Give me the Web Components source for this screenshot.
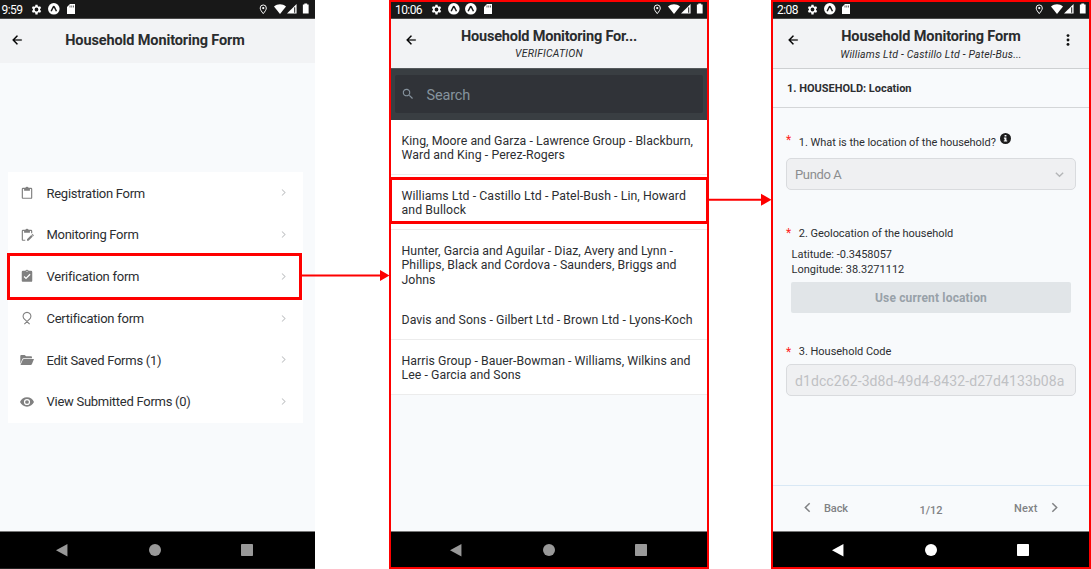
<!DOCTYPE html>
<html lang="en">
<head>
<meta charset="utf-8">
<title>Household Monitoring Form</title>
<style>
body{margin:0;background:#fff;width:1091px;height:569px;overflow:hidden;font-family:Roboto,"Noto Sans",sans-serif;color:#2c2e31}
</style>
</head>
<body>
<form-flow></form-flow>
<script>
const make = (name, html, setup) => customElements.define(name, class extends HTMLElement {
  constructor(){ super(); this.attachShadow({mode:'open'}).innerHTML = typeof html === 'function' ? '' : html; }
  connectedCallback(){
    if (typeof html === 'function') this.shadowRoot.innerHTML = html(this);
    if (setup) setup(this);
  }
});

// A single line of text, tracked so that it fills the width in its "w" attribute.
make('fit-text', `<style>:host{display:block;width:max-content;white-space:nowrap;flex:none}</style><slot></slot>`, el => {
  const w = +el.getAttribute('w');
  const natural = el.getBoundingClientRect().width;
  if (w && natural) el.style.letterSpacing = ((w - natural) / el.textContent.length) + 'px';
});

const ICONS = {
  gear:'<path d="M19.4 13a7 7 0 0 0 0-2l2.1-1.6-2-3.5-2.500 1a7 7 0 0 0-1.700-1L14.900 3h-4l-.4 2.900a7 7 0 0 0-1.700 1l-2.500-1-2 3.500L6.400 11a7 7 0 0 0 0 2l-2.100 1.600 2 3.500 2.500-1a7 7 0 0 0 1.700 1l.4 2.900h4l.4-2.900a7 7 0 0 0 1.700-1l2.500 1 2-3.500zM12.900 15.500a3.500 3.500 0 1 1 0-7 3.500 3.500 0 0 1 0 7z" transform="translate(-.9 0)"/>',
  expo:'<circle cx="12" cy="12" r="12"/><path d="M6.500 17 L11 8Q12 6.500 13 8L17.500 17" fill="none" stroke="#181818" stroke-width="3"/>',
  sd:'<path d="M20 2H10L4 8v14h16z"/><path d="M10 5v4M13.500 5v4M17 5v4" stroke="#181818" stroke-width="1.300"/>',
  pin:'<path d="M12 22C8 17 5 13 5 9.200a7 7 0 0 1 14 0C19 13 16 17 12 22z" fill="none" stroke="currentColor" stroke-width="2.200"/><circle cx="12" cy="9.200" r="2.600"/>',
  wifi:'<path d="M0 7C7 1 17 1 24 7L12 22z"/>',
  signal:'<path d="M0 23L23 0v23z"/><path d="M18.500 8v13" stroke="#181818" stroke-width="2.400"/>',
  battery:'<path d="M9 1h6v2h3v19H6V3h3z"/>',
  back:'<path d="M20 11H7.800l5.600-5.600L12 4l-8 8 8 8 1.400-1.400L7.800 13H20z" stroke="currentColor" stroke-width=".4"/>',
  clip:'<path d="M19 3h-4.200a3 3 0 0 0-5.600 0H5a2 2 0 0 0-2 2v15c0 1.100.9 2 2 2h14a2 2 0 0 0 2-2V5a2 2 0 0 0-2-2zm0 17H5V5h2v3h10V5h2z"/>',
  clipedit:'<path d="M9 20H5V5h2v3h10V5h2v4h2V5a2 2 0 0 0-2-2h-4.200a3 3 0 0 0-5.600 0H5a2 2 0 0 0-2 2v15c0 1.100.9 2 2 2h4z"/><path d="M12 22v-2.600l7.300-7.300 2.600 2.600L14.600 22zM20 11.400l.8-.8q.6-.5 1.200 0l1.400 1.400q.5.600 0 1.200l-.8.8z"/>',
  clipcheck:'<path d="M19 3h-4.200a3 3 0 0 0-5.600 0H5a2 2 0 0 0-2 2v15c0 1.100.9 2 2 2h14a2 2 0 0 0 2-2V5a2 2 0 0 0-2-2z"/><path d="M7 12.800l3.300 3.300L17.300 9" stroke="#fff" stroke-width="2.200" fill="none"/><circle cx="12" cy="4" r="1" fill="#fff"/>',
  ribbon:'<g fill="none" stroke="currentColor" stroke-width="1.900"><path d="M7.500 22.500L15.800 14.500A6.700 6.700 0 1 0 8.200 14.500L16.500 22.500"/></g>',
  folder:'<path d="M.5 19V5q0-1.500 1.500-1.500H8l2.500 2H19q1.500 0 1.500 1.500V9H6Q4.500 9 3.800 10.500z"/><path d="M.8 20.500L5 11.300Q5.500 10.300 6.700 10.300H24l-3.700 9Q19.700 20.500 18.500 20.500z"/>',
  eye:'<path d="M12 4C6.500 4 2 7.500 0 12c2 4.500 6.500 8 12 8S22 16.500 24 12C22 7.500 17.500 4 12 4zM12 17.300a5.300 5.300 0 1 1 0-10.600 5.300 5.300 0 0 1 0 10.600z"/><circle cx="12" cy="12" r="3.200"/>',
  chev:'<path d="M8 4l8 8-8 8" fill="none" stroke="currentColor" stroke-width="2.800"/>',
  chevl:'<path d="M16 4l-8 8 8 8" fill="none" stroke="currentColor" stroke-width="2.800"/>',
  down:'<path d="M4 8l8 8 8-8" fill="none" stroke="currentColor" stroke-width="3"/>',
  search:'<path d="M15.500 14h-.8l-.3-.3a6.500 6.500 0 1 0-.7.7l.3.300v.8l5 5 1.500-1.500zM9.500 14a4.500 4.500 0 1 1 0-9 4.500 4.500 0 0 1 0 9z"/>',
  dots:'<circle cx="12" cy="3.200" r="2.900"/><circle cx="12" cy="12" r="2.900"/><circle cx="12" cy="20.800" r="2.900"/>',
  info:'<circle cx="12" cy="12" r="12"/><path d="M10 4.200h4v3.600h-4zM8.500 9.800H14v6.500h1.700v2.500H8.300v-2.500H10v-4H8.500z" fill="#f8fafc"/>',
  tri:'<path d="M0 12L22 0v24z"/>',
  dot:'<circle cx="12" cy="12" r="12"/>',
  box:'<rect width="24" height="24" rx="1.500"/>'
};
make('ui-icon', el => `<style>:host{display:block;flex:none;width:${el.getAttribute('s')}px;height:${el.getAttribute('s')}px}svg{display:block;overflow:visible}</style>
<svg width="100%" height="100%" viewBox="0 0 24 24" fill="currentColor">${ICONS[el.getAttribute('n')]}</svg>`);

make('status-bar', el => {
  const n = +el.getAttribute('expo') || 1;
  return `<style>
:host{display:flex;align-items:center;background:#181818;color:#fff;flex:none;box-sizing:border-box;border-bottom:1px solid #4a4a4a;font-size:12px;line-height:14px}
.time{width:var(--time,30px);padding-top:1px}.e{margin-left:5.400px}.sd{margin-left:5px}
.r{display:flex;align-items:center;margin-left:auto}
</style><div class="time"><fit-text w="${el.getAttribute('tw')}">${el.getAttribute('time')}</fit-text></div>
<ui-icon n="gear" s="13"></ui-icon>${'<ui-icon class="e" n="expo" s="11.600"></ui-icon>'.repeat(n)}<ui-icon class="sd" n="sd" s="12"></ui-icon>
<div class="r"><ui-icon n="pin" s="10.500" style="margin-right:6px"></ui-icon><ui-icon n="wifi" s="12" style="margin-right:1px"></ui-icon><ui-icon n="signal" s="10" style="margin-right:3px"></ui-icon><ui-icon n="battery" s="11.500"></ui-icon></div>`;
});

make('app-header', el => {
  const sub = el.getAttribute('sub');
  return `<style>
:host{display:grid;grid-template-columns:40px 1fr 40px;background:#f2f3f5;flex:none;box-sizing:border-box;color:#2a2c2e}
.b{color:#000;padding:14.200px 0 0 var(--bx,13px)}.m{color:#111;padding:15.300px 0 0 13px}
.t{display:flex;flex-direction:column;align-items:center;padding-top:var(--ty,8px);margin-left:var(--tx,0)}
.h{font-size:14.500px;font-weight:700;line-height:18px}.s{font-size:10.500px;font-style:italic;line-height:14px;margin-top:var(--sy,0)}
</style><div class="b"><ui-icon n="back" s="14"></ui-icon></div>
<div class="t"><fit-text class="h" w="${el.getAttribute('tw')}">${el.getAttribute('title-text')}</fit-text>${sub ? `<fit-text class="s" w="${el.getAttribute('sw')}">${sub}</fit-text>` : ''}</div>
<div class="m">${el.hasAttribute('menu') ? '<ui-icon n="dots" s="12"></ui-icon>' : ''}</div>`;
});

make('nav-bar', `<style>
:host{display:flex;background:#000;border-top:1px solid #777;flex:none;height:var(--nh,36px);box-sizing:border-box;margin-top:auto;padding:12px 0 0 var(--nx,59px);color:var(--nc,#999)}
</style><ui-icon n="tri" s="12.500"></ui-icon><ui-icon n="dot" s="12" style="margin-left:80.500px"></ui-icon><ui-icon n="box" s="12" style="margin-left:80px"></ui-icon>`);

make('phone-screen', `<style>:host{display:flex;flex-direction:column;box-sizing:border-box;height:569px;background:#f8fafc}</style><slot></slot>`);

make('menu-row', el => `<style>
:host{display:flex;align-items:center;height:41.750px;padding:0 12px 0 12px;font-size:13px;line-height:16px}
.i{color:#808080;margin-right:12.500px}.c{color:#c2c4c6;margin-left:auto}fit-text{margin-top:1.600px}
</style><ui-icon class="i" n="${el.getAttribute('icon')}" s="14"></ui-icon><fit-text w="${el.getAttribute('w')}">${el.textContent}</fit-text><ui-icon class="c" n="chev" s="9" style="margin-right:2.500px"></ui-icon>`);

make('menu-screen', `<style>
:host{display:contents}.card{background:#fff;width:294.500px;margin:109px 0 0 8px}
status-bar{height:19px;padding:0 3.500px 0 1.500px;--time:28.300px}
app-header{height:44px;--bx:10px;--ty:13px;--tx:-5px}nav-bar{--nx:56px;--nh:37px}
</style><phone-screen style="border-bottom:1px solid #222">
<status-bar time="9:59" tw="20.800"></status-bar>
<app-header title-text="Household Monitoring Form" tw="179.500"></app-header>
<div class="card">
<menu-row icon="clip" w="98.500">Registration Form</menu-row>
<menu-row icon="clipedit" w="92">Monitoring Form</menu-row>
<menu-row icon="clipcheck" w="92.300">Verification form</menu-row>
<menu-row icon="ribbon" w="97">Certification form</menu-row>
<menu-row icon="folder" w="114.800">Edit Saved Forms (1)</menu-row>
<menu-row icon="eye" w="144">View Submitted Forms (0)</menu-row>
</div><nav-bar></nav-bar></phone-screen>`);

make('list-row', `<style>:host{display:block;box-sizing:border-box;padding:13.700px 10.500px 11.300px;border-bottom:1px solid #ececec;background:#fff;font-size:12.300px;line-height:14.500px}:host([plain]){border-color:#fff}</style><slot></slot>`);

make('list-screen', `<style>
:host{display:contents}phone-screen{border:2px solid #fe0000}
status-bar{height:17px;padding:0 1.500px 2px 4px;--time:34.600px}
app-header{height:49px;--ty:9.200px;--sy:.8px}
.s{background:#393e42;padding:6px 4px 7px;border-top:1px solid #55595c;height:52px;box-sizing:border-box;flex:none}
.f{background:#303338;border-radius:2px;height:38px;display:flex;align-items:center;color:#86939e;font-size:14.500px;padding-left:6px}
.f ui-icon{margin-right:11.500px}.f fit-text{margin-top:2px}
</style><phone-screen>
<status-bar time="10:06" tw="27" expo="2"></status-bar>
<app-header title-text="Household Monitoring For..." tw="176" sub="VERIFICATION" sw="68"></app-header>
<div class="s"><div class="f"><ui-icon n="search" s="14"></ui-icon><fit-text w="43.500">Search</fit-text></div></div>
<list-row><fit-text w="291.500">King, Moore and Garza - Lawrence Group - Blackburn,</fit-text><fit-text w="163.500">Ward and King - Perez-Rogers</fit-text></list-row>
<list-row><fit-text w="284.500">Williams Ltd - Castillo Ltd - Patel-Bush - Lin, Howard</fit-text><fit-text w="64.500">and Bullock</fit-text></list-row>
<list-row plain><fit-text w="271.500">Hunter, Garcia and Aguilar - Diaz, Avery and Lynn -</fit-text><fit-text w="275">Phillips, Black and Cordova - Saunders, Briggs and</fit-text><fit-text w="34">Johns</fit-text></list-row>
<list-row><fit-text w="291">Davis and Sons - Gilbert Ltd - Brown Ltd - Lyons-Koch</fit-text></list-row>
<list-row><fit-text w="289">Harris Group - Bauer-Bowman - Williams, Wilkins and</fit-text><fit-text w="119.500">Lee - Garcia and Sons</fit-text></list-row>
<nav-bar></nav-bar></phone-screen>`);

make('question-label', el => `<style>:host{display:flex;height:14px;line-height:14px;font-size:11px;padding-left:13px}
b{color:#f22;font-weight:400;font-size:12px;width:12.800px;margin-top:var(--ay,1px)}fit-text{margin-top:1px}ui-icon{margin:-2.500px 0 0 4px;color:#1c1c1c}</style>
<b>*</b><fit-text w="${el.getAttribute('w')}">${el.textContent}</fit-text>${el.hasAttribute('info') ? '<ui-icon n="info" s="11"></ui-icon>' : ''}`);

make('form-screen', `<style>
:host{display:contents}phone-screen{border:2px solid #fe0000}
status-bar{height:17px;padding:0 1px 2px 4px;--time:28.500px}
app-header{height:50px;--ty:9.200px;--sy:1.600px;border-bottom:1px solid #cdcfd1}
.sec{height:39px;box-sizing:border-box;border-bottom:1px solid #d4d6d8;padding:13px 0 0 14px;font-size:11px;font-weight:700;line-height:14px;flex:none}
.fld{margin:0 13px;height:32px;box-sizing:border-box;border:1px solid #d9dbde;border-radius:5px;background:#eff0f2;display:flex;align-items:center;justify-content:space-between;padding:0 10px 0 8px;color:#8b8d8f;font-size:13px}
.fld fit-text{margin-top:1px}
.geo{margin:7.500px 0 0 18.500px;font-size:11px;line-height:15px}
.btn{margin:5px 18px 0;height:31px;background:#e1e5e8;border-radius:2px;display:flex;align-items:center;justify-content:center;color:#98a1a8;font-size:12px;font-weight:700}
.btn fit-text{margin-top:1.500px}
.ft{margin-top:auto;border-top:1px solid #d9e8f5;height:46px;box-sizing:border-box;display:flex;font-size:11px;line-height:14px;font-weight:500;color:#808284;padding:16px 28.500px 0 28px;flex:none}
.ft ui-icon{margin-top:-.7px}
nav-bar{--nc:#fff;margin-top:0}
</style><phone-screen>
<status-bar time="2:08" tw="20.800"></status-bar>
<app-header menu title-text="Household Monitoring Form" tw="179.500" sub="Williams Ltd - Castillo Ltd - Patel-Bus..." sw="181.500"></app-header>
<div class="sec"><fit-text w="124.500">1. HOUSEHOLD: Location</fit-text></div>
<question-label info w="197" style="margin-top:27px;--ay:-2.500px">1. What is the location of the household?</question-label>
<div class="fld" style="margin-top:9px"><fit-text w="46.500">Pundo A</fit-text><ui-icon n="down" s="11" style="color:#b4b6b8"></ui-icon></div>
<question-label w="154.500" style="margin-top:35.500px;--ay:.5px">2. Geolocation of the household</question-label>
<div class="geo"><fit-text w="100.500">Latitude: -0.3458057</fit-text><fit-text w="112.800">Longitude: 38.3271112</fit-text></div>
<div class="btn"><fit-text w="112">Use current location</fit-text></div>
<question-label w="92.500" style="margin-top:31px;--ay:.5px">3. Household Code</question-label>
<div class="fld" style="margin-top:6px;color:#bfc1c4;font-size:14px"><fit-text w="269.500">d1dcc262-3d8d-49d4-8432-d27d4133b08a</fit-text></div>
<div class="ft"><ui-icon n="chevl" s="13"></ui-icon><fit-text w="24" style="margin-left:10px">Back</fit-text><fit-text w="23" style="margin:2px auto 0">1/12</fit-text><fit-text w="23.500" style="margin-right:10px">Next</fit-text><ui-icon n="chev" s="13"></ui-icon></div>
<nav-bar></nav-bar></phone-screen>`);

// The three screens side by side, with the tapped rows framed and linked by arrows above them.
make('form-flow', `<style>
:host{display:grid;grid-template-columns:315px 74px 320px 62px 320px;position:relative;height:569px}
.mark{position:absolute;border:3px solid #fe0000;box-sizing:border-box}
svg{position:absolute;left:0;top:0}
</style><menu-screen></menu-screen><span></span><list-screen></list-screen><span></span><form-screen></form-screen>
<div class="mark" style="left:7px;top:253px;width:295px;height:47px"></div>
<div class="mark" style="left:389px;top:177px;width:320px;height:47px"></div>
<svg width="1091" height="569" fill="#fe0000"><path d="M302 274.500h78v-4.500l9.500 5.500-9.500 5.500v-4.500h-78zM709 198.800h52v-5l10.500 6-10.500 6v-5h-52z"/></svg>`);
</script>
</body>
</html>
